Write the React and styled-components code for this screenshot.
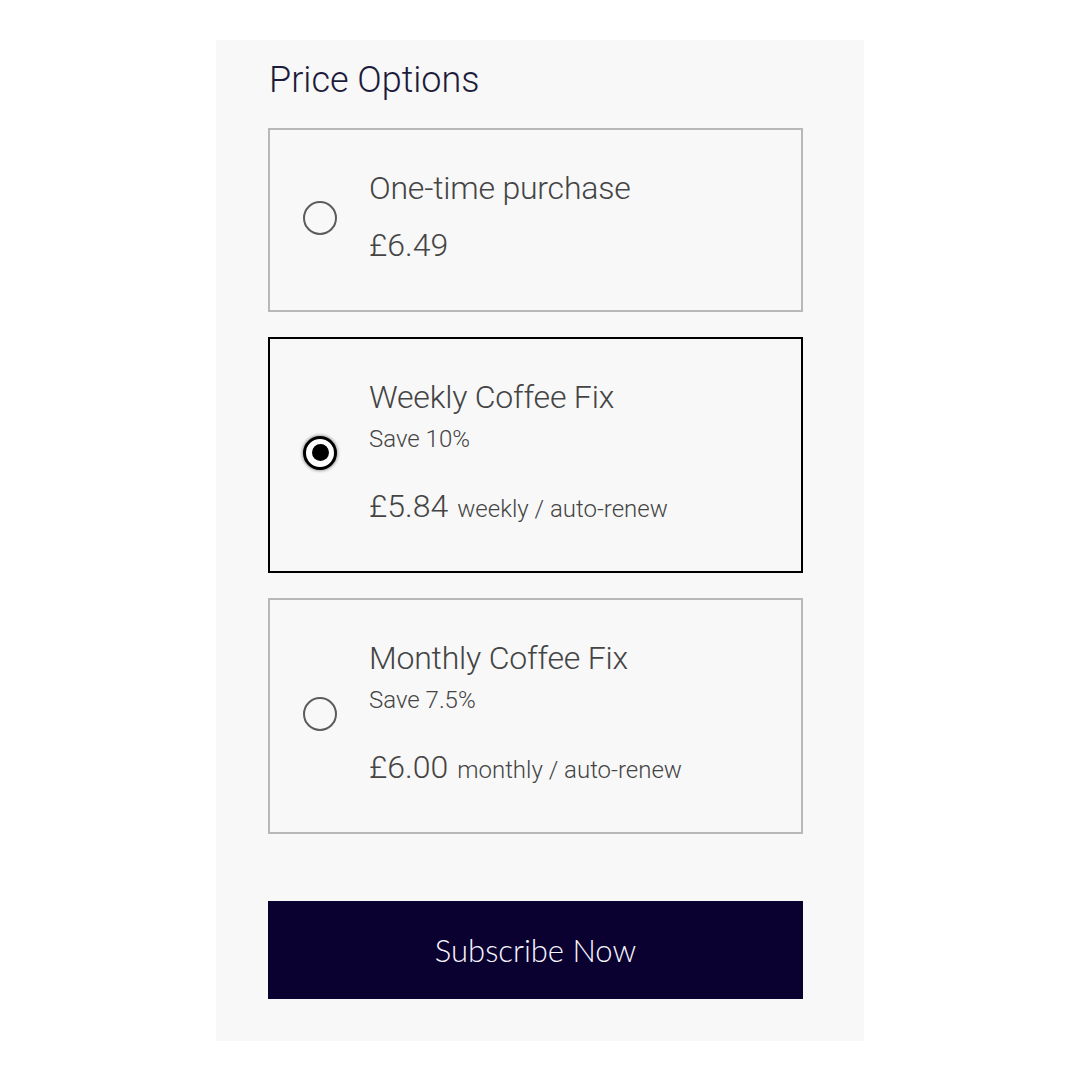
import React, { useState } from "react";
import styled, { createGlobalStyle } from "styled-components";

const GlobalStyle = createGlobalStyle`
  body {
    margin: 0;
    background: #ffffff;
    font-family: Roboto, "Liberation Sans", sans-serif;
  }
`;

const Page = styled.div`
  display: flex;
  justify-content: center;
  padding: 40px 0;
`;

const Panel = styled.section`
  width: 648px;
  box-sizing: border-box;
  padding: 18px 61px 42px 52px;
  background: #f8f8f8;
  display: flex;
  flex-direction: column;
`;

const Heading = styled.h2`
  margin: 0 0 26px 1px;
  font-size: 36px;
  line-height: 44px;
  font-weight: 300;
  color: #1c1b3b;
`;

const Options = styled.div`
  display: flex;
  flex-direction: column;
  gap: 25px;
`;

const Card = styled.label`
  display: flex;
  align-items: center;
  padding: 38px 20px 45px 33px;
  border: 2px solid ${(p) => (p.$active ? "#000000" : "#b8b8b8")};
  cursor: pointer;
`;

const Radio = styled.span`
  flex: none;
  width: 34px;
  height: 34px;
  box-sizing: border-box;
  border-radius: 50%;
  border: ${(p) => (p.$checked ? "3px solid #000" : "2.5px solid #5c5c5c")};
  background: ${(p) => (p.$checked ? "#ffffff" : "transparent")};
  box-shadow: ${(p) => (p.$checked ? "0 0 3px 1px rgba(0,0,0,0.35)" : "none")};
  display: flex;
  align-items: center;
  justify-content: center;
  margin-top: 2px;

  &::after {
    content: "";
    display: ${(p) => (p.$checked ? "block" : "none")};
    width: 17px;
    height: 17px;
    border-radius: 50%;
    background: #000;
  }
`;

const Body = styled.div`
  margin-left: 32px;
  display: flex;
  flex-direction: column;
  color: #444444;
`;

const Name = styled.div`
  font-size: 32px;
  line-height: 40px;
  font-weight: 300;
  letter-spacing: -0.2px;
`;

const Saving = styled.div`
  margin-top: 8px;
  font-size: 24px;
  line-height: 28px;
  font-weight: 300;
`;

const PriceRow = styled.div`
  margin-top: ${(p) => (p.$spaced ? "33px" : "17px")};
  font-size: 32px;
  line-height: 40px;
  font-weight: 300;
`;

const Period = styled.span`
  margin-left: 9px;
  font-size: 24px;
  line-height: 1;
`;

const SubscribeButton = styled.button`
  margin-top: 67px;
  height: 98px;
  border: none;
  background: #0b0131;
  color: #f7f6ff;
  font-family: Lato, "Open Sans", sans-serif;
  font-weight: 300;
  font-size: 31px;
  cursor: pointer;
`;

const plans = [
  { id: "once", name: "One-time purchase", price: "£6.49" },
  {
    id: "weekly",
    name: "Weekly Coffee Fix",
    saving: "Save 10%",
    price: "£5.84",
    period: "weekly / auto-renew",
  },
  {
    id: "monthly",
    name: "Monthly Coffee Fix",
    saving: "Save 7.5%",
    price: "£6.00",
    period: "monthly / auto-renew",
  },
];

export default function App() {
  const [selected, setSelected] = useState("weekly");

  return (
    <>
      <GlobalStyle />
      <Page>
        <Panel>
          <Heading>Price Options</Heading>
          <Options>
            {plans.map((plan) => (
              <Card
                key={plan.id}
                $active={selected === plan.id}
                onClick={() => setSelected(plan.id)}
              >
                <Radio $checked={selected === plan.id} />
                <Body>
                  <Name>{plan.name}</Name>
                  {plan.saving && <Saving>{plan.saving}</Saving>}
                  <PriceRow $spaced={!!plan.saving}>
                    {plan.price}
                    {plan.period && <Period>{plan.period}</Period>}
                  </PriceRow>
                </Body>
              </Card>
            ))}
          </Options>
          <SubscribeButton>Subscribe Now</SubscribeButton>
        </Panel>
      </Page>
    </>
  );
}
